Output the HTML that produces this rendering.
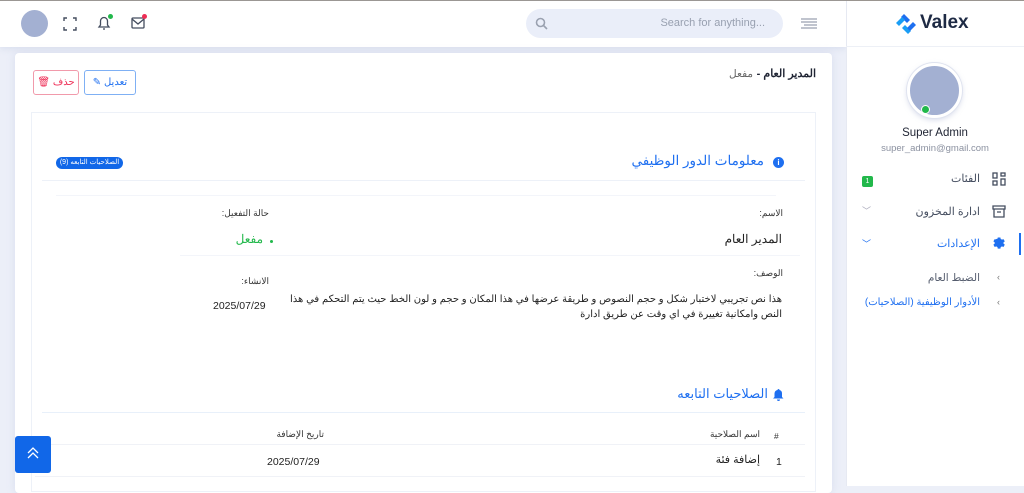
<!DOCTYPE html>
<html><head><meta charset="utf-8"><style>
*{margin:0;padding:0;box-sizing:border-box}
body{width:1024px;height:486px;overflow:hidden;background:#eceff8;font-family:"Liberation Sans","Noto Sans CJK SC",sans-serif;position:relative;color:#1f2433}
.a{position:absolute}
.r{direction:rtl;white-space:nowrap}
</style></head><body>
<div class="a" style="left:0;top:0;width:1024px;height:1px;background:#9a9590"></div>
<div class="a" style="left:0;top:1px;width:846px;height:46px;background:#fff;box-shadow:0 2px 6px rgba(180,190,220,.3)"></div>
<div class="a" style="left:21px;top:10px;width:27px;height:27px;border-radius:50%;background:#a3b0d2"></div>
<svg class="a" style="left:63px;top:17px" width="14" height="14" viewBox="0 0 14 14" fill="none" stroke="#444d5f" stroke-width="1.4"><path d="M1 4V1h3M10 1h3v3M13 10v3h-3M4 13H1v-3"/></svg>
<svg class="a" style="left:97px;top:15px" width="14" height="16" viewBox="0 0 14 16" fill="none" stroke="#444d5f" stroke-width="1.3"><path d="M2 12h10l-1.5-2V6a3.5 3.5 0 0 0-7 0v4z"/><path d="M6 14h2"/></svg>
<div class="a" style="left:108px;top:14px;width:5px;height:5px;border-radius:50%;background:#22b84b"></div>
<svg class="a" style="left:131px;top:17px" width="14" height="12" viewBox="0 0 14 12" fill="none" stroke="#444d5f" stroke-width="1.3"><rect x="1" y="1" width="12" height="10" rx="1"/><path d="M1 2l6 5 6-5"/></svg>
<div class="a" style="left:142px;top:14px;width:5px;height:5px;border-radius:50%;background:#ee2d55"></div>
<div class="a" style="left:526px;top:9px;width:257px;height:29px;border-radius:15px;background:#eaeef9"></div>
<svg class="a" style="left:535px;top:17px" width="13" height="13" viewBox="0 0 13 13" fill="none" stroke="#9aa1b0" stroke-width="1.6"><circle cx="5.5" cy="5.5" r="4"/><path d="M8.5 8.5l3.5 3.5"/></svg>
<div class="a" style="left:640px;top:17px;width:125px;font-size:11px;color:#98a0b0;text-align:right">Search for anything...</div>
<svg class="a" style="left:801px;top:18px" width="16" height="11" viewBox="0 0 16 11" stroke="#9aa1b0" stroke-width="1.2"><path d="M0 1h16M0 4h16M3 7h13M0 10h16"/></svg>
<div class="a" style="left:846px;top:1px;width:178px;height:485px;background:#fff;border-left:1px solid #e6e9f2"></div>
<div class="a" style="left:846px;top:46px;width:178px;height:1px;background:#edf0f6"></div>
<svg class="a" style="left:894px;top:12px" width="24" height="24" viewBox="0 0 24 24"><path d="M10 2l6 6-3 3-6-6z" fill="#1e6ff0"/><path d="M2 11l6-6 3 3-6 6z" fill="#1a9ef5"/><path d="M14 22l-6-6 3-3 6 6z" fill="#1a9ef5"/><path d="M22 13l-6 6-3-3 6-6z" fill="#1e6ff0"/></svg>
<div class="a" style="left:920px;top:12px;font-size:19px;font-weight:bold;color:#1e2a44">Valex</div>
<div class="a" style="left:907px;top:63px;width:55px;height:55px;border-radius:50%;background:#a3b0d2;border:3px solid #fff;box-shadow:0 0 0 1px #dfe3ef,0 2px 6px rgba(150,160,200,.4)"></div>
<div class="a" style="left:921px;top:105px;width:9px;height:9px;border-radius:50%;background:#22b84b;border:1.5px solid #fff"></div>
<div class="a" style="left:846px;top:127px;width:178px;text-align:center;font-size:11.5px;color:#1f2433">Super Admin</div>
<div class="a" style="left:846px;top:143px;width:178px;text-align:center;font-size:9.5px;color:#8b91a0">super_admin@gmail.com</div>
<svg class="a" style="left:992px;top:172px" width="14" height="14" viewBox="0 0 14 14" fill="none" stroke="#444d5f" stroke-width="1.3"><rect x="1" y="1" width="4" height="5"/><rect x="9" y="1" width="4" height="3"/><rect x="1" y="9" width="4" height="4"/><rect x="9" y="7" width="4" height="6"/></svg>
<div class="a r" style="right:44px;top:172px;font-size:11px;color:#444d5f">الفئات</div>
<div class="a" style="left:862px;top:176px;width:11px;height:11px;background:#22b84b;border-radius:2px;color:#fff;font-size:7px;text-align:center;line-height:11px">1</div>
<svg class="a" style="left:992px;top:205px" width="14" height="13" viewBox="0 0 14 13" fill="none" stroke="#444d5f" stroke-width="1.3"><path d="M1 1h12v3H1zM2 4v8h10V4M5 7h4"/></svg>
<div class="a r" style="right:44px;top:205px;font-size:11px;color:#444d5f">ادارة المخزون</div>
<div class="a" style="left:862px;top:204px;font-size:9px;color:#aab">﹀</div>
<svg class="a" style="left:991px;top:236px" width="15" height="15" viewBox="0 0 24 24" fill="#1e6ff0"><path d="M12 8a4 4 0 1 0 0 8 4 4 0 0 0 0-8zm9.4 5.5l2-1.5-2-3.5-2.4.8a8 8 0 0 0-1.8-1L16.7 6h-4l-.5 2.3a8 8 0 0 0-1.8 1L8 8.5 6 12l2 1.5a8 8 0 0 0 0 2L6 17l2 3.5 2.4-.8a8 8 0 0 0 1.8 1l.5 2.3h4l.5-2.3a8 8 0 0 0 1.8-1l2.4.8 2-3.5-2-1.5a8 8 0 0 0 0-2z" transform="translate(-2.5 -4) scale(1.05)"/></svg>
<div class="a r" style="right:44px;top:237px;font-size:11px;color:#1e6ff0">الإعدادات</div>
<div class="a" style="left:862px;top:237px;font-size:9px;color:#1e6ff0">﹀</div>
<div class="a" style="left:1019px;top:233px;width:2px;height:22px;background:#1e6ff0"></div>
<div class="a r" style="right:44px;top:272px;font-size:10.5px;color:#555d6e">الضبط العام</div>
<div class="a" style="left:997px;top:272px;font-size:9px;color:#777">‹</div>
<div class="a r" style="right:44px;top:297px;font-size:10px;color:#1e6ff0">الأدوار الوظيفية (الصلاحيات)</div>
<div class="a" style="left:997px;top:297px;font-size:9px;color:#777">‹</div>
<div class="a" style="left:15px;top:53px;width:817px;height:440px;background:#fff;border-radius:4px;box-shadow:0 0 8px rgba(180,190,220,.35)"></div>
<div class="a r" style="right:208px;top:67px;font-size:11px;font-weight:bold;color:#1f2433">المدير العام -</div>
<div class="a r" style="right:271px;top:68px;font-size:10.5px;color:#666">مفعل</div>
<div class="a" style="left:84px;top:70px;width:52px;height:25px;border:1px solid #7fb0f4;border-radius:3px;color:#1e6ff0;font-size:10px;text-align:center;line-height:23px">✎ تعديل</div>
<div class="a" style="left:33px;top:70px;width:46px;height:25px;border:1px solid #f19aab;border-radius:3px;color:#ee2d55;font-size:10px;text-align:center;line-height:23px">🗑 حذف</div>
<div class="a" style="left:31px;top:112px;width:785px;height:380px;border:1px solid #edf1f8"></div>
<div class="a" style="left:773px;top:157px;width:11px;height:11px;border-radius:50%;background:#1e6ff0;color:#fff;font-size:8px;font-weight:bold;text-align:center;line-height:11px">i</div>
<div class="a r" style="right:260px;top:153px;font-size:13.5px;color:#1e6ff0">معلومات الدور الوظيفي</div>
<div class="a" style="left:56px;top:157px;width:67px;height:12px;border-radius:6px;background:#1167e8;color:#fff;font-size:7px;text-align:center;line-height:12px;direction:rtl">الصلاحيات التابعه (9)</div>
<div class="a" style="left:42px;top:180px;width:763px;height:1px;background:#edf1f8"></div>
<div class="a" style="left:56px;top:195px;width:720px;height:1px;background:#f3f5fa"></div>
<div class="a r" style="right:241px;top:208px;font-size:9px;color:#333">الاسم:</div>
<div class="a r" style="right:755px;top:208px;font-size:9px;color:#333">حالة التفعيل:</div>
<div class="a r" style="right:242px;top:232px;font-size:12px;color:#222">المدير العام</div>
<div class="a r" style="right:761px;top:232px;font-size:12px;color:#22b84b">مفعل</div>
<div class="a" style="left:270px;top:240px;width:3px;height:3px;border-radius:50%;background:#22b84b"></div>
<div class="a" style="left:180px;top:255px;width:620px;height:1px;background:#f3f5fa"></div>
<div class="a r" style="right:241px;top:268px;font-size:9px;color:#333">الوصف:</div>
<div class="a r" style="right:755px;top:276px;font-size:9px;color:#333">الانشاء:</div>
<div class="a r" style="right:242px;top:292px;font-size:10px;line-height:15px;color:#222;text-align:right">هذا نص تجريبي لاختبار شكل و حجم النصوص و طريقة عرضها في هذا المكان و حجم و لون الخط حيث يتم التحكم في هذا<br>النص وامكانية تغييرة في اي وقت عن طريق ادارة</div>
<div class="a" style="left:213px;top:300px;font-size:10.5px;color:#222">2025/07/29</div>
<div class="a r" style="right:256px;top:386px;font-size:13px;color:#1e6ff0">الصلاحيات التابعه</div>
<svg class="a" style="left:773px;top:389px" width="11" height="12" viewBox="0 0 11 12" fill="#1e6ff0"><path d="M5.5 0a1 1 0 0 1 1 1 3.5 3.5 0 0 1 2.5 3.5V8l1.5 1.5H0L1.5 8V4.5A3.5 3.5 0 0 1 4.5 1a1 1 0 0 1 1-1zM4 10.5h3a1.5 1.5 0 0 1-3 0z"/></svg>
<div class="a" style="left:42px;top:412px;width:763px;height:1px;background:#e8f0fa"></div>
<div class="a" style="left:774px;top:431px;font-size:8.5px;color:#333">#</div>
<div class="a r" style="right:264px;top:429px;font-size:9px;color:#333">اسم الصلاحية</div>
<div class="a r" style="right:700px;top:429px;font-size:9px;color:#333">تاريخ الإضافة</div>
<div class="a" style="left:35px;top:444px;width:770px;height:1px;background:#f0f2f7"></div>
<div class="a" style="left:776px;top:456px;font-size:10.5px;color:#222">1</div>
<div class="a r" style="right:264px;top:453px;font-size:11px;color:#222">إضافة فئة</div>
<div class="a" style="left:267px;top:456px;font-size:10.5px;color:#222">2025/07/29</div>
<div class="a" style="left:35px;top:476px;width:770px;height:1px;background:#f0f2f7"></div>
<div class="a" style="left:15px;top:436px;width:36px;height:37px;background:#1167e8;border-radius:3px"></div>
<svg class="a" style="left:26px;top:446px" width="14" height="14" viewBox="0 0 14 14" fill="none" stroke="#fff" stroke-width="1.3"><path d="M2 7l5-5 5 5M2 12l5-5 5 5"/></svg>
</body></html>
